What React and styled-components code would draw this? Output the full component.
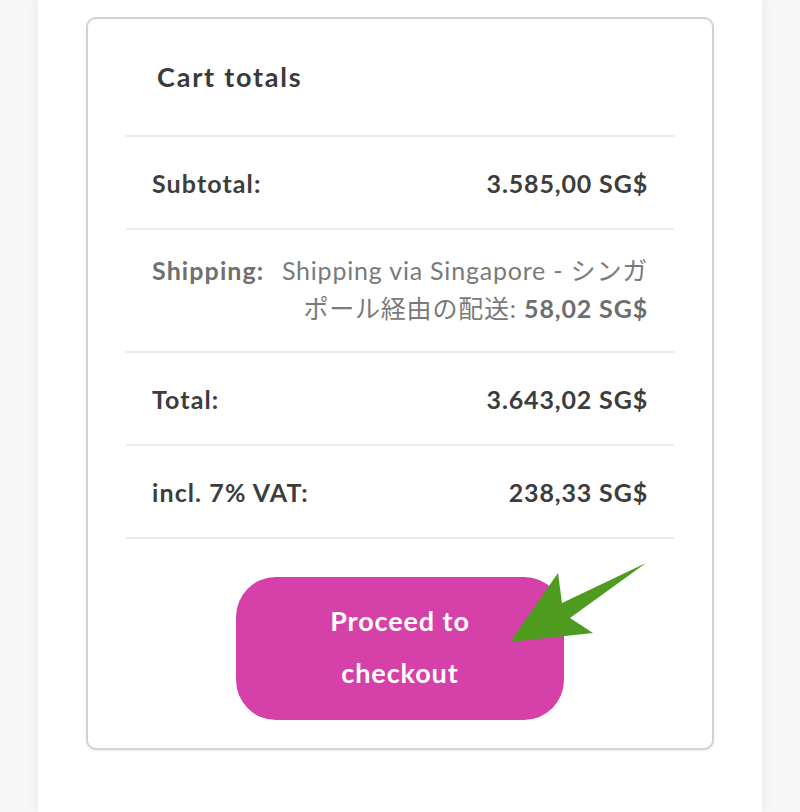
import React from "react";
import styled, { createGlobalStyle } from "styled-components";

const Global = createGlobalStyle`
  html, body { margin: 0; padding: 0; }
  body {
    background: #f7f7f7;
    font-family: "Lato", "Noto Sans CJK JP", sans-serif;
    -webkit-font-smoothing: antialiased;
  }
`;

const Page = styled.div`
  margin: 0 38px;
  min-height: 812px;
  background: #fff;
  box-shadow: 0 0 12px rgba(0, 0, 0, 0.08);
  padding: 17px 48px 40px;
  box-sizing: border-box;
`;

const Card = styled.section`
  border: 2px solid #d2d2d2;
  border-radius: 10px;
  box-shadow: 0 1px 2px rgba(0, 0, 0, 0.08);
  padding: 0 38px 28px;
`;

const Title = styled.h2`
  margin: 0;
  padding: 38px 0 38px 31px;
  font-size: 27px;
  letter-spacing: 1.8px;
  line-height: 40px;
  font-weight: 700;
  color: #3a3a3a;
  border-bottom: 2px solid #ebebeb;
`;

const Row = styled.div`
  display: flex;
  align-items: flex-start;
  gap: 16px;
  padding: ${(p) => (p.$tight ? "21px 26px 24px" : "27px 26px 26px")};
  border-bottom: 2px solid #ebebeb;
  font-size: 25px;
  line-height: 38px;
  color: ${(p) => (p.$muted ? "#7a7a7a" : "#3d3d3d")};
`;

const Label = styled.div`
  flex: none;
  font-weight: 700;
  letter-spacing: 1.1px;
  white-space: nowrap;
  color: ${(p) => (p.$muted ? "#707070" : "inherit")};
`;

const Value = styled.div`
  flex: 1;
  text-align: right;
  font-weight: ${(p) => (p.$regular ? 400 : 700)};
  letter-spacing: ${(p) => (p.$regular ? "0.8px" : "0.85px")};
`;

const Strong = styled.strong`
  font-weight: 700;
  letter-spacing: 0.85px;
  color: #6e6e6e;
`;

const ButtonArea = styled.div`
  display: flex;
  justify-content: center;
  padding-top: 38px;
`;

const ButtonWrap = styled.div`
  position: relative;
`;

const CheckoutButton = styled.button`
  display: block;
  width: 328px;
  height: 143px;
  box-sizing: border-box;
  padding: 16px 50px 20px;
  border: none;
  border-radius: 40px;
  background: #d541a9;
  color: #fff;
  font-family: "Lato", sans-serif;
  font-weight: 700;
  font-size: 27px;
  letter-spacing: 0.9px;
  line-height: 52px;
  text-align: center;
  cursor: pointer;
`;

const Arrow = styled.svg`
  position: absolute;
  left: 272px;
  top: -16px;
  width: 140px;
  height: 84px;
  pointer-events: none;
`;

export default function App() {
  return (
    <>
      <Global />
      <Page>
        <Card>
          <Title>Cart totals</Title>
          <Row>
            <Label>Subtotal:</Label>
            <Value>3.585,00 SG$</Value>
          </Row>
          <Row $muted $tight>
            <Label $muted>Shipping:</Label>
            <Value $regular>
              Shipping via Singapore - シンガポール経由の配送: <Strong>58,02 SG$</Strong>
            </Value>
          </Row>
          <Row>
            <Label>Total:</Label>
            <Value>3.643,02 SG$</Value>
          </Row>
          <Row>
            <Label>incl. 7% VAT:</Label>
            <Value>238,33 SG$</Value>
          </Row>
          <ButtonArea>
            <ButtonWrap>
              <CheckoutButton>Proceed to checkout</CheckoutButton>
              <Arrow viewBox="508 561 140 84">
                <polygon
                  points="510,642 558,573 562,603 646,563 570,618 593,633"
                  fill="#4f9b1f"
                />
              </Arrow>
            </ButtonWrap>
          </ButtonArea>
        </Card>
      </Page>
    </>
  );
}
